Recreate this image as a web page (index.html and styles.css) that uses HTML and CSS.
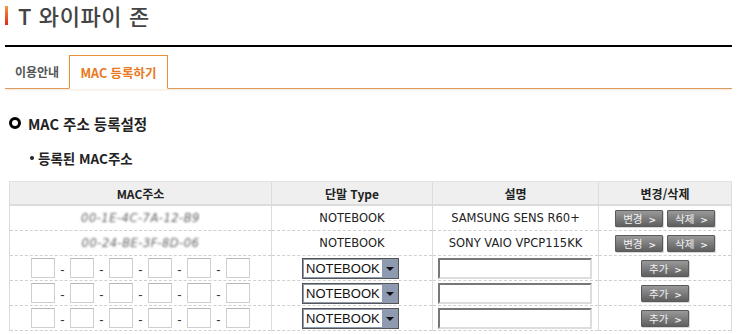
FILE: index.html
```html
<!DOCTYPE html>
<html lang="ko">
<head>
    <meta charset="UTF-8">
    <meta name="viewport" content="width=device-width, initial-scale=1.0">
    <title>T 와이파이 존 - MAC 등록하기</title>
    <link rel="stylesheet" href="styles.css">
</head>
<body>
    <div id="page">
        <div class="title_bar">
            <span class="title_mark"></span>
            <h1>T 와이파이 존</h1>
        </div>
        <div class="tabs">
            <a class="tab">이용안내</a>
            <a class="tab active">MAC 등록하기</a>
        </div>

        <h2 class="section_title"><span class="ring"></span>MAC 주소 등록설정</h2>
        <h3 class="sub_title"><span class="dot"></span>등록된 MAC주소</h3>

        <table class="mac_table">
            <colgroup>
                <col style="width: 262px">
                <col style="width: 161px">
                <col style="width: 166px">
                <col style="width: 133px">
            </colgroup>
            <thead>
                <tr>
                    <th>MAC주소</th>
                    <th>단말 Type</th>
                    <th>설명</th>
                    <th>변경/삭제</th>
                </tr>
            </thead>
            <tbody>
                <tr>
                    <td><span class="masked">00-1E-4C-7A-12-B9</span></td>
                    <td>NOTEBOOK</td>
                    <td>SAMSUNG SENS R60+</td>
                    <td><span class="btn">변경 <b>&gt;</b></span><span class="btn">삭제 <b>&gt;</b></span></td>
                </tr>
                <tr>
                    <td><span class="masked">00-24-BE-3F-8D-06</span></td>
                    <td>NOTEBOOK</td>
                    <td>SONY VAIO VPCP115KK</td>
                    <td><span class="btn">변경 <b>&gt;</b></span><span class="btn">삭제 <b>&gt;</b></span></td>
                </tr>
                <tr class="new_row">
                    <td>
                        <div class="mac_inputs">
                            <input type="text"><span>-</span><input type="text"><span>-</span><input type="text"><span>-</span><input type="text"><span>-</span><input type="text"><span>-</span><input type="text">
                        </div>
                    </td>
                    <td><div class="fake_select"><span class="value">NOTEBOOK</span><span class="arrow"></span></div></td>
                    <td><input type="text" class="desc"></td>
                    <td><span class="btn">추가 <b>&gt;</b></span></td>
                </tr>
                <tr class="new_row">
                    <td>
                        <div class="mac_inputs">
                            <input type="text"><span>-</span><input type="text"><span>-</span><input type="text"><span>-</span><input type="text"><span>-</span><input type="text"><span>-</span><input type="text">
                        </div>
                    </td>
                    <td><div class="fake_select"><span class="value">NOTEBOOK</span><span class="arrow"></span></div></td>
                    <td><input type="text" class="desc"></td>
                    <td><span class="btn">추가 <b>&gt;</b></span></td>
                </tr>
                <tr class="new_row">
                    <td>
                        <div class="mac_inputs">
                            <input type="text"><span>-</span><input type="text"><span>-</span><input type="text"><span>-</span><input type="text"><span>-</span><input type="text"><span>-</span><input type="text">
                        </div>
                    </td>
                    <td><div class="fake_select"><span class="value">NOTEBOOK</span><span class="arrow"></span></div></td>
                    <td><input type="text" class="desc"></td>
                    <td><span class="btn">추가 <b>&gt;</b></span></td>
                </tr>
            </tbody>
        </table>
    </div>
</body>
</html>
```

FILE: styles.css
```css
body {
    margin: 0;
    background-color: #fff;
    font-family: "DejaVu Sans", "Noto Sans CJK KR", sans-serif;
    color: #333;
}

#page {
    padding-left: 5px;
    width: 727px;
}

.title_bar {
    display: flex;
    align-items: center;
    height: 47px;
    border-bottom: 2px solid #000;
    padding-bottom: 15px;
    box-sizing: border-box;
}

.title_mark {
    width: 3px;
    height: 19px;
    background: linear-gradient(#f29a3a, #e1261b);
    margin-right: 10px;
}

h1 {
    margin: 0;
    font-family: "Noto Sans CJK KR", sans-serif;
    font-size: 22px;
    font-weight: 500;
    color: #444;
    letter-spacing: 0.6px;
}

.tabs {
    display: flex;
    align-items: flex-end;
    height: 41px;
    border-bottom: 1px solid #dd9a5c;
    box-shadow: 0 2px 2px -1px #f3e6da;
}

.tab {
    font-family: "Noto Sans CJK KR", sans-serif;
    font-size: 12px;
    font-weight: 700;
    color: #555;
    width: 64px;
    height: 31px;
    line-height: 30px;
    text-align: center;
}

.tab.active {
    width: 97px;
    height: 32px;
    border: 1px solid #e8923a;
    border-bottom: 1px solid #fff;
    margin-bottom: -1px;
    color: #ea7820;
    font-size: 12.5px;
    line-height: 33px;
    background-color: #fff;
}

.section_title {
    display: flex;
    align-items: center;
    margin: 25px 0 0 4px;
    height: 18px;
    font-family: "Noto Sans CJK KR", sans-serif;
    font-size: 14.5px;
    font-weight: 700;
    color: #222;
}

.ring {
    width: 6px;
    height: 6px;
    border: 3px solid #000;
    border-radius: 50%;
    margin-right: 7px;
}

.sub_title {
    display: flex;
    align-items: center;
    margin: 17px 0 0 25px;
    height: 18px;
    font-family: "Noto Sans CJK KR", sans-serif;
    font-size: 13.5px;
    font-weight: 700;
    color: #222;
}

.dot {
    width: 4px;
    height: 4px;
    background-color: #222;
    border-radius: 50%;
    margin-right: 4px;
}

.mac_table {
    margin: 14px 0 0 4px;
    width: 722px;
    border-collapse: collapse;
    table-layout: fixed;
    border-left: 1px solid #dcdcdc;
    border-right: 1px solid #dcdcdc;
}

.mac_table th {
    background-color: #efefef;
    height: 22px;
    border-top: 1px solid #e2e2e2;
    border-bottom: 2px solid #dcdcdc;
    border-left: 1px solid #dcdcdc;
    font-family: "Noto Sans CJK KR", sans-serif;
    font-size: 12px;
    font-weight: 700;
    color: #222;
    padding: 0;
}

.mac_table td {
    height: 24px;
    border-bottom: 1px dashed #d0d0d0;
    border-left: 1px solid #dcdcdc;
    text-align: center;
    font-size: 11.5px;
    color: #222;
    padding: 0;
}

.masked {
    color: #666;
    filter: blur(0.8px);
    letter-spacing: 0.5px;
    font-style: italic;
}

.btn {
    display: inline-block;
    height: 15px;
    line-height: 15px;
    padding: 0 6px 0 7px;
    margin: 0 2px;
    background: linear-gradient(#999, #5f5f5f);
    border: 1px solid #5a5a5a;
    border-radius: 1px;
    box-shadow: 1px 1px 0 #d8d8d8;
    color: #f2f2f2;
    font-family: "Noto Sans CJK KR", sans-serif;
    font-size: 10.5px;
    vertical-align: middle;
}

.btn b {
    font-family: "DejaVu Sans", sans-serif;
    font-size: 9px;
    margin-left: 3px;
}

.mac_inputs {
    display: flex;
    align-items: center;
    padding-left: 21px;
}

.mac_inputs input {
    width: 22px;
    height: 18px;
    padding: 0;
    border: 1px solid #cfcfcf;
    border-top-color: #b8b8b8;
    margin: 0;
}

.mac_inputs span {
    width: 15px;
    padding-top: 2px;
    text-align: center;
    font-family: "Liberation Sans", sans-serif;
    font-size: 13px;
    color: #333;
}

.fake_select {
    display: flex;
    width: 93px;
    height: 17px;
    margin-left: 30px;
    border: 2px solid #8d9ab0;
    outline: 1px solid #555;
    outline-offset: -1px;
    background-color: #fff;
}

.fake_select .value {
    flex: 1;
    text-align: left;
    padding-left: 2px;
    font-family: "Liberation Sans", sans-serif;
    font-size: 13px;
    line-height: 17px;
    color: #111;
}

.fake_select .arrow {
    width: 15px;
    background-color: #8d9ab0;
    position: relative;
}

.fake_select .arrow::after {
    content: "";
    position: absolute;
    left: 4px;
    top: 7px;
    border-left: 4px solid transparent;
    border-right: 4px solid transparent;
    border-top: 4px solid #111;
}

.desc {
    width: 150px;
    height: 17px;
    padding: 0;
    margin-left: 5px;
    border: 2px solid;
    border-color: #777 #ddd #ddd #777;
    display: block;
}
```
